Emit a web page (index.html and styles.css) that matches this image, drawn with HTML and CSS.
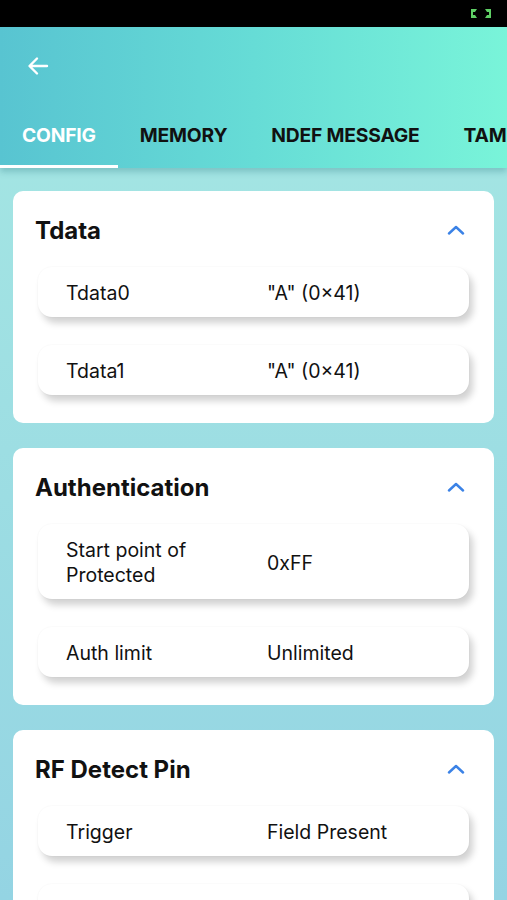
FILE: index.html
```html
<!DOCTYPE html>
<html lang="en">
<head>
  <meta charset="UTF-8" />
  <meta name="viewport" content="width=device-width, initial-scale=1.0"/>
  <title>Tag Config</title>
  <link rel="stylesheet" href="styles.css">
</head>
<body>

  <div class="status-bar">
    <svg class="status-icon" width="24" height="11" viewBox="0 0 24 11">
      <path d="M2 1h6l-2 3h-2v3h2l2 3h-6z" fill="#5fcf65"/>
      <path d="M22 1h-6l2 3h2v3h-2l-2 3h6z" fill="#5fcf65"/>
    </svg>
  </div>

  <header class="app-bar">
    <div class="toolbar">
      <svg class="back" width="24" height="24" viewBox="0 0 24 24">
        <path d="M21 12H4M11 4.5L3.5 12l7.5 7.5" fill="none" stroke="#fff" stroke-width="2.4" stroke-linecap="round" stroke-linejoin="round"/>
      </svg>
    </div>
    <nav class="tabs">
      <div class="tab active">CONFIG</div>
      <div class="tab">MEMORY</div>
      <div class="tab">NDEF MESSAGE</div>
      <div class="tab">TAMPER</div>
    </nav>
  </header>

  <main class="content">

    <section class="card">
      <div class="card-head">
        <h2>Tdata</h2>
        <svg class="chevron" width="18" height="10" viewBox="0 0 18 10">
          <path d="M2 8.5L9 2l7 6.5" fill="none" stroke="#3b82e6" stroke-width="2.4" stroke-linecap="round" stroke-linejoin="round"/>
        </svg>
      </div>
      <div class="rows">
        <div class="row"><span class="label">Tdata0</span><span class="value">"A" (0×41)</span></div>
        <div class="row"><span class="label">Tdata1</span><span class="value">"A" (0×41)</span></div>
      </div>
    </section>

    <section class="card">
      <div class="card-head">
        <h2>Authentication</h2>
        <svg class="chevron" width="18" height="10" viewBox="0 0 18 10">
          <path d="M2 8.5L9 2l7 6.5" fill="none" stroke="#3b82e6" stroke-width="2.4" stroke-linecap="round" stroke-linejoin="round"/>
        </svg>
      </div>
      <div class="rows">
        <div class="row tall"><span class="label">Start point of<br>Protected</span><span class="value">0xFF</span></div>
        <div class="row"><span class="label">Auth limit</span><span class="value">Unlimited</span></div>
      </div>
    </section>

    <section class="card">
      <div class="card-head">
        <h2>RF Detect Pin</h2>
        <svg class="chevron" width="18" height="10" viewBox="0 0 18 10">
          <path d="M2 8.5L9 2l7 6.5" fill="none" stroke="#3b82e6" stroke-width="2.4" stroke-linecap="round" stroke-linejoin="round"/>
        </svg>
      </div>
      <div class="rows">
        <div class="row"><span class="label">Trigger</span><span class="value">Field Present</span></div>
        <div class="row"><span class="label">Output</span><span class="value">Low</span></div>
      </div>
    </section>

  </main>

</body>
</html>
```

FILE: styles.css
```css
* {
  box-sizing: border-box;
}

body {
  margin: 0;
  font-family: Inter, 'Noto Sans', sans-serif;
  color: #111;
  background: linear-gradient(180deg, #a6e8e3 0%, #94d4e3 100%);
  height: 100vh;
  overflow: hidden;
}

.status-bar {
  height: 27px;
  background: #000;
  display: flex;
  justify-content: flex-end;
  align-items: center;
  padding-right: 14px;
}

.app-bar {
  height: 141px;
  background: linear-gradient(90deg, #58c4d1 0%, #66dcd6 50%, #79f4d9 100%);
  box-shadow: 0 4px 6px rgba(40, 120, 130, 0.3);
  display: flex;
  flex-direction: column;
  position: relative;
}

.toolbar {
  height: 77px;
  display: flex;
  align-items: center;
  padding-left: 26px;
}

.tabs {
  display: flex;
  height: 64px;
  white-space: nowrap;
  overflow: hidden;
}

.tab {
  font-weight: 700;
  font-size: 19.3px;
  color: #111;
  padding: 0 22px;
  display: flex;
  align-items: center;
  letter-spacing: -0.2px;
  border-bottom: 3px solid transparent;
}

.tab:first-child {
  width: 118px;
  justify-content: center;
}

.tab.active {
  color: #fff;
  border-bottom-color: #fff;
}

.content {
  display: flex;
  flex-direction: column;
  gap: 25px;
  padding: 23px 13px;
}

.card {
  background: #fff;
  border-radius: 10px;
  padding: 0 25px 28px;
}

.card-head {
  height: 76px;
  display: flex;
  align-items: center;
  justify-content: space-between;
  padding: 2px 4px 0 0;
  margin-left: -3px;
}

.card-head h2 {
  margin: 0;
  font-size: 24px;
  font-weight: 700;
}

.rows {
  display: flex;
  flex-direction: column;
  gap: 28px;
}

.row {
  height: 50px;
  border-radius: 14px;
  background: #fff;
  box-shadow: 4px 6px 7px rgba(0, 0, 0, 0.18), 0 0 2px rgba(0, 0, 0, 0.05);
  display: grid;
  grid-template-columns: 201px 1fr;
  align-items: center;
  padding: 3px 0 0 28px;
  font-size: 19.5px;
  line-height: 25px;
}

.row.tall {
  height: 75px;
}
```
